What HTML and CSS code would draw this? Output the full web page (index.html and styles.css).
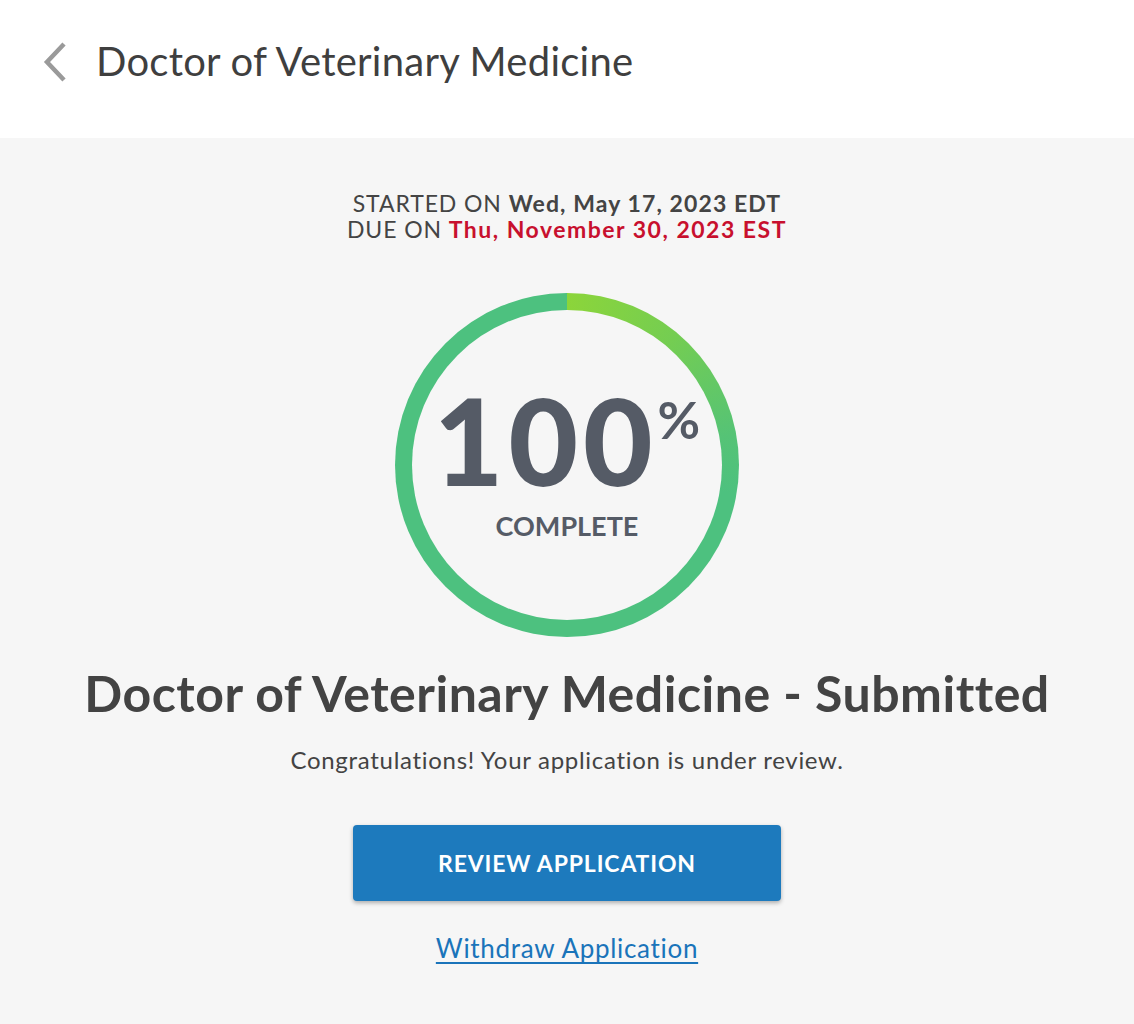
FILE: index.html
```html
<!DOCTYPE html>
<html lang="en">
<head>
<meta charset="utf-8">
<title>Doctor of Veterinary Medicine</title>
<link rel="stylesheet" href="styles.css">
</head>
<body>
<header class="topbar">
  <a class="back" href="#" aria-label="Back">
    <svg width="26" height="42" viewBox="0 0 26 42"><path d="M22 3 L5 21 L22 39" fill="none" stroke="#9a9a9a" stroke-width="4.5"/></svg>
  </a>
  <h1 class="page-title">Doctor of Veterinary Medicine</h1>
</header>
<main class="content">
  <div class="dates">
    <div>STARTED ON <strong>Wed, May 17, 2023 EDT</strong></div>
    <div>DUE ON <strong class="due">Thu, November 30, 2023 EST</strong></div>
  </div>
  <div class="ring">
    <div class="ring-inner">
      <div class="pct"><span class="num">100</span><span class="sign">%</span></div>
      <div class="complete">COMPLETE</div>
    </div>
  </div>
  <h2 class="status">Doctor of Veterinary Medicine - Submitted</h2>
  <p class="msg">Congratulations! Your application is under review.</p>
  <button class="review">REVIEW APPLICATION</button>
  <a class="withdraw" href="#">Withdraw Application</a>
</main>
</body>
</html>
```
FILE: styles.css
```css
* { box-sizing: border-box; }
html, body { margin: 0; padding: 0; }
body {
  font-family: Lato, "Noto Sans", sans-serif;
  color: #434343;
  background: #f6f6f6;
  min-height: 1024px;
}
.topbar {
  background: #fff;
  height: 138px;
  display: flex;
  align-items: flex-start;
  padding: 39px 0 0 42px;
}
.back { display: block; width: 26px; height: 42px; margin-top: 2px; }
.back svg { display: block; }
.page-title {
  margin: 0 0 0 28px;
  font-weight: 400;
  font-size: 40px;
  line-height: 44px;
  letter-spacing: 0.25px;
  color: #3f3f3f;
}
.content {
  display: flex;
  flex-direction: column;
  align-items: center;
  padding-top: 52px;
}
.dates {
  text-align: center;
  font-size: 23px;
  line-height: 26px;
  letter-spacing: 0.9px;
  color: #444;
}
.dates strong { font-weight: 700; letter-spacing: 1.1px; }
.dates .due { color: #c8102e; letter-spacing: 1.5px; }
.ring {
  margin-top: 51px;
  width: 344px;
  height: 344px;
  border-radius: 50%;
  background: conic-gradient(from 0deg, #8cd53a 0deg, #74cd52 40deg, #55c376 80deg, #4dc17f 100deg, #4dc17f 360deg);
  padding: 17px;
}
.ring-inner {
  width: 100%;
  height: 100%;
  border-radius: 50%;
  background: #f6f6f6;
  display: flex;
  flex-direction: column;
  align-items: center;
  padding-top: 82px;
}
.pct { display: flex; align-items: flex-start; color: #555b66; }
.num { font-size: 120px; font-weight: 900; line-height: 96px; letter-spacing: 5px; margin-right: 0; }
.sign { font-size: 52px; font-weight: 700; line-height: 52px; margin-top: 1px; }
.complete { margin-top: 23px; font-size: 27px; font-weight: 700; line-height: 30px; color: #555b66; }
.status {
  margin: 26px 0 0;
  font-size: 50px;
  font-weight: 700;
  line-height: 60px;
  letter-spacing: 0.5px;
  color: #434343;
}
.msg { margin: 22px 0 0; font-size: 24px; line-height: 30px; letter-spacing: 0.7px; color: #434343; }
.review {
  margin-top: 50px;
  width: 428px;
  height: 76px;
  border: 0;
  border-radius: 4px;
  background: #1d7abd;
  color: #fff;
  font-family: inherit;
  font-size: 23px;
  font-weight: 700;
  letter-spacing: 0.85px;
  box-shadow: 0 2px 4px rgba(0,0,0,0.3);
}
.withdraw {
  margin-top: 31px;
  font-size: 26px;
  line-height: 32px;
  letter-spacing: 0.7px;
  color: #1a74ba;
  text-decoration: underline;
  text-decoration-thickness: 2px;
  text-underline-offset: 4px;
}
```
